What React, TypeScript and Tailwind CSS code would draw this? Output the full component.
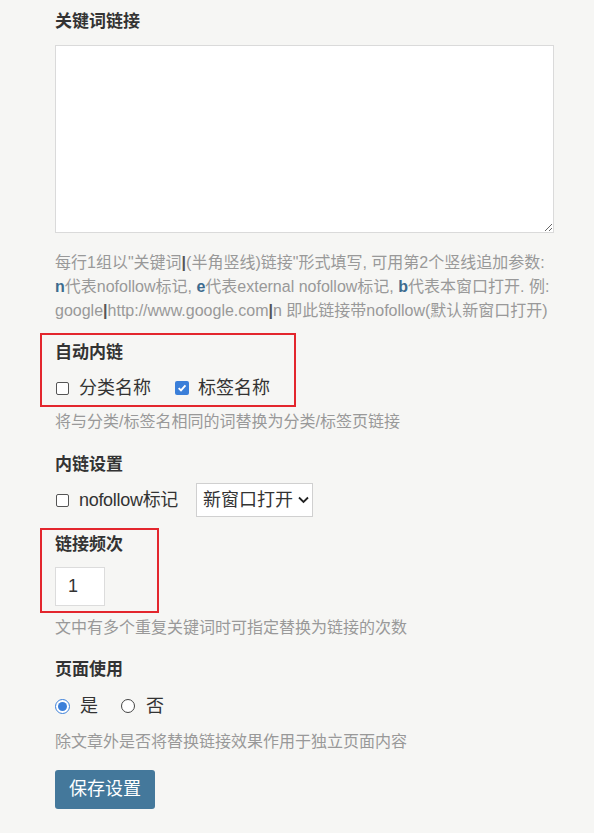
import React from "react";

const F = { fontFamily: '"Liberation Sans", "Noto Sans CJK SC", sans-serif' };

function Box({ checked }: { checked?: boolean }) {
  if (checked)
    return (
      <span className="flex h-[14px] w-[14px] shrink-0 items-center justify-center rounded-[2px] bg-[#3b7fd9]">
        <svg width="10" height="10" viewBox="0 0 9 9">
          <polyline points="1.5,4.6 3.6,6.7 7.6,2.2" fill="none" stroke="#fff" strokeWidth="1.7" />
        </svg>
      </span>
    );
  return <span className="block h-[13px] w-[13px] shrink-0 rounded-[2px] border border-[#555] bg-white" />;
}

function Radio({ checked }: { checked?: boolean }) {
  if (checked)
    return (
      <span className="flex h-[15px] w-[15px] shrink-0 items-center justify-center rounded-full border border-[#3b7fd9] bg-white">
        <span className="block h-[9px] w-[9px] rounded-full bg-[#3b7fd9]" />
      </span>
    );
  return <span className="block h-[14px] w-[14px] shrink-0 rounded-full border border-[#444] bg-white" />;
}

export default function App() {
  return (
    <div style={F} className="min-h-[833px] w-full bg-[#f6f6f4] pl-[55px] pr-[40px] pt-[10px] text-[#333]">
      <div className="text-[17px] font-bold leading-[24px]">关键词链接</div>
      <textarea className="mt-[11px] block h-[188px] w-[499px] border border-[#dadada] bg-white outline-none" />
      <div className="mt-[18px] w-[500px] overflow-hidden whitespace-nowrap text-[16px] leading-[24px] text-[#999]">
        <div>每行1组以"关键词<b className="text-[#555]">|</b>(半角竖线)链接"形式填写, 可用第2个竖线追加参数:</div>
        <div>
          <b className="text-[#3d6b8e]">n</b>代表nofollow标记, <b className="text-[#3d6b8e]">e</b>代表external nofollow标记, <b className="text-[#3d6b8e]">b</b>代表本窗口打开. 例:
        </div>
        <div>
          google<b className="text-[#555]">|</b>http://www.google.com<b className="text-[#555]">|</b>n 即此链接带nofollow(默认新窗口打开)
        </div>
      </div>

      <div className="relative mt-[18px]">
        <div className="pointer-events-none absolute -left-[15px] -top-[8px] h-[74px] w-[256px] border-2 border-[#e3262d]" />
        <div className="text-[17px] font-bold leading-[24px]">自动内链</div>
        <div className="mt-[11px] flex h-[24px] items-center text-[18px]">
          <span className="ml-[1px]"><Box /></span>
          <span className="ml-[10px] whitespace-nowrap">分类名称</span>
          <span className="ml-[24px]"><Box checked /></span>
          <span className="ml-[9px] whitespace-nowrap">标签名称</span>
        </div>
      </div>
      <div className="mt-[10px] text-[16px] leading-[24px] text-[#999]">将与分类/标签名相同的词替换为分类/标签页链接</div>

      <div className="mt-[19px] text-[17px] font-bold leading-[24px]">内链设置</div>
      <div className="mt-[6px] flex h-[34px] items-center text-[18px]">
        <span className="ml-[1px]"><Box /></span>
        <span className="ml-[10px] whitespace-nowrap tracking-[-0.3px]">nofollow标记</span>
        <div className="ml-[18px] flex h-[34px] w-[117px] shrink-0 items-center whitespace-nowrap border border-[#d0d0d0] bg-white pl-[6px]">
          <span>新窗口打开</span>
          <svg className="ml-[5px] shrink-0" width="11" height="8" viewBox="0 0 11 8">
            <polyline points="1,1.5 5.5,6 10,1.5" fill="none" stroke="#222" strokeWidth="1.8" />
          </svg>
        </div>
      </div>

      <div className="relative mt-[16px]">
        <div className="pointer-events-none absolute -left-[15px] -top-[5px] h-[85px] w-[119px] border-2 border-[#e3262d]" />
        <div className="text-[17px] font-bold leading-[24px]">链接频次</div>
        <div className="mt-[10px] flex h-[39px] w-[50px] items-center border border-[#dcdcdc] bg-white pl-[12px] text-[18px]">1</div>
      </div>
      <div className="mt-[10px] text-[16px] leading-[24px] text-[#999]">文中有多个重复关键词时可指定替换为链接的次数</div>

      <div className="mt-[18px] text-[17px] font-bold leading-[24px]">页面使用</div>
      <div className="mt-[12px] flex h-[24px] items-center text-[18px]">
        <Radio checked />
        <span className="ml-[10px]">是</span>
        <span className="ml-[23px]"><Radio /></span>
        <span className="ml-[11px]">否</span>
      </div>
      <div className="mt-[12px] text-[16px] leading-[24px] text-[#999]">除文章外是否将替换链接效果作用于独立页面内容</div>

      <button className="mt-[16px] flex h-[39px] w-[100px] items-center justify-center rounded-[3px] bg-[#44789b] text-[18px] text-white">
        保存设置
      </button>
    </div>
  );
}
